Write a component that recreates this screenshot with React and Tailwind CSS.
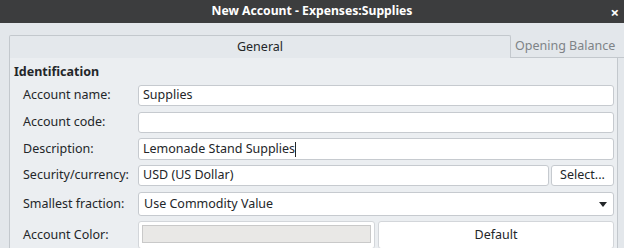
export default function App() {
  const font = { fontFamily: '"Noto Sans", "Open Sans", sans-serif' };
  const input = "h-[21px] bg-white border border-[#c6cacf] rounded-[3px] flex items-center pl-[4px] text-[12.5px] text-[#232629]";
  const label = "w-[115px] text-[12.5px] text-[#232629]";
  return (
    <div className="w-[624px] h-[248px] overflow-hidden bg-[#e3e7eb] flex flex-col" style={font}>
      <div className="h-[23px] shrink-0 bg-[#3c3d3e] flex items-center justify-center relative">
        <span className="text-white font-bold text-[12.2px]">New Account - Expenses:Supplies</span>
        <span className="absolute right-[5px] top-[1px] text-white font-bold text-[15px]">×</span>
      </div>
      <div className="pl-[9px] pt-[12px] flex flex-col">
        <div className="flex h-[23px]">
          <div className="w-[502px] border-l border-t border-r border-[#c3c8cd] bg-[#e4e8ec] rounded-t-[2px] flex items-center justify-center pt-[1px] text-[12.5px] text-[#232629]">
            General
          </div>
          <div className="flex-1 border-b border-[#c3c8cd] flex items-end pb-[1px] pl-[4px] text-[12.5px] text-[#7e8387]">
            Opening Balance
          </div>
        </div>
        <div className="w-[609px] h-[200px] border-l border-r border-[#c3c8cd] bg-[#ebeef1] pl-[4px] pr-[3px] pt-[5px] flex flex-col">
          <div className="font-bold text-[12.5px] text-[#232629] h-[18px] leading-[18px]">Identification</div>
          <div className="flex flex-col pl-[9px] mt-[4px]">
            <div className="flex items-center h-[21px]">
              <div className={label}>Account name:</div>
              <div className={input + " flex-1"}>Supplies</div>
            </div>
            <div className="flex items-center h-[21px] mt-[6px]">
              <div className={label}>Account code:</div>
              <div className={input + " flex-1"}></div>
            </div>
            <div className="flex items-center h-[22px] mt-[5px]">
              <div className={label}>Description:</div>
              <div className={input + " flex-1 h-[22px]"}>
                Lemonade Stand Supplies<span className="inline-block w-[1px] h-[15px] bg-[#232629]"></span>
              </div>
            </div>
            <div className="flex items-center h-[21px] mt-[5px]">
              <div className={label}>Security/currency:</div>
              <div className={input + " flex-1"}>USD (US Dollar)</div>
              <div className="ml-[2px] w-[63px] h-[21px] bg-white border border-[#c6cacf] rounded-[3px] flex items-center justify-center text-[12.5px] text-[#232629]">Select...</div>
            </div>
            <div className="flex items-center h-[24px] mt-[6px]">
              <div className={label}>Smallest fraction:</div>
              <div className="flex-1 h-[24px] bg-white border border-[#c6cacf] rounded-[3px] flex items-center pl-[5px] pr-[6px] text-[12.5px] text-[#232629]">
                <span className="flex-1">Use Commodity Value</span>
                <svg width="8" height="5" viewBox="0 0 8 5"><path d="M0 0 L8 0 L4 5 Z" fill="#232629" /></svg>
              </div>
            </div>
            <div className="flex items-start h-[28px] mt-[5px]">
              <div className={label + " mt-[5px]"}>Account Color:</div>
              <div className="w-[237px] h-[28px] bg-white border border-[#d3d6da] rounded-[3px] p-[3px]">
                <div className="w-full h-[18px] bg-[#e9e8e6] border border-[#c9c9c9]"></div>
              </div>
              <div className="ml-[3px] flex-1 h-[28px] bg-white border border-[#d3d6da] rounded-[3px] flex items-center justify-center text-[12.5px] text-[#232629]">Default</div>
            </div>
          </div>
        </div>
      </div>
    </div>
  );
}
